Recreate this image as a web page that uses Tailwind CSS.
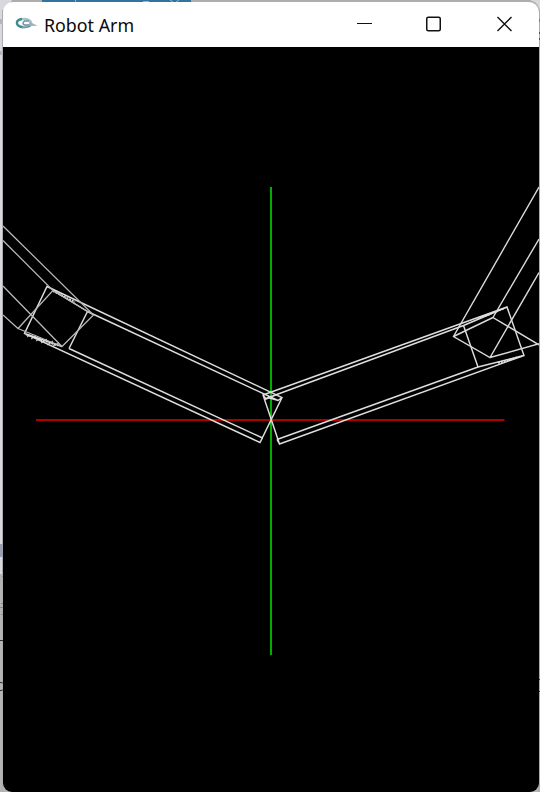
<!DOCTYPE html>
<html lang="en">
<head>
<meta charset="utf-8">
<title>Robot Arm</title>
<script src="https://cdn.jsdelivr.net/npm/@tailwindcss/browser@4"></script>
</head>
<body class="relative h-[792px] w-[540px] overflow-hidden bg-[#b4b4b6]">
<!-- desktop strips visible around the window -->
<svg class="absolute inset-0" width="540" height="792" viewBox="0 0 540 792">
<path fill="#d8d8df" d="M0 0h12v5H7L2 14v560H0z"/>
<path fill="#adadad" d="M12 0h528v4H10zM2 10h1v782H2zM538 10h2v782h-2z"/>
<path fill="#3274a0" d="M42 0h149v2H42z"/>
<path stroke="#8fb7d1" d="M75.500 0v2M143 1.500h6M170 0l3 2M179 0l-3 2"/>
<path fill="#b4b4c4" d="M0 19h3v5H0zM0 51h3v4H0z"/>
<path fill="#9a9eaf" d="M0 544h3v13H0z"/>
<path stroke="#303030" d="M0 640.500h3M0 682.500h2l1 1M0 690.500h2l1-1M539 679.500h1M539 691.500h1"/>
<path stroke="#888" d="M2 570.500h1M2 576.500h1M1 603.500h2M0 607.500h3M1 614.500h2"/>
<path fill="#d8d8dc" d="M530 0h10v10z"/>
<path fill="#adadad" d="M528 0q11 1 12 13h-3L527 2z"/>
<path fill="#4c8fae" d="M539 19h1v3h-1z"/><path fill="#664c55" d="M539 32h1v2h-1zM539 38h1v2h-1z"/>
</svg>
<main class="relative ml-[3px] flex h-[792px] w-[536px] flex-col overflow-hidden rounded-b-[9px] rounded-t-[10px] pt-[2px]">
<header class="flex h-[45px] shrink-0 items-center rounded-t-[10px] bg-white">
<svg class="mb-[4px] ml-[12px] shrink-0" width="24" height="14" viewBox="0 0 24 14" fill="none">
<ellipse cx="9" cy="7" rx="7" ry="4" stroke="#a9c3cb" stroke-width="2.500"/>
<path d="M7 2.800C-.5 4 .5 10.500 8 11.300" stroke="#3d8c90" stroke-width="2.200"/>
<path d="M7 11.300q5 1 9-1.600" stroke="#6f9ba5" stroke-width="1.500"/>
<path d="M14 5H9.500q-3 2.500 0 4h6" stroke="#6f929e" stroke-width="1.500"/>
<path d="M14 5.500l8.500 4.200-8 .3z" fill="#9bb3bd"/>
</svg>
<h1 class="ml-[5px] w-[100px] whitespace-nowrap font-['Noto_Sans',sans-serif] text-[18px] leading-[24px] font-normal text-[#0a0a0a]"><span class="inline-block origin-left scale-x-[.99]">Robot Arm</span></h1>
<div class="ml-auto flex items-center pr-[26px]">
<svg width="18" height="18" viewBox="0 0 18 18"><path stroke="#111" d="M2 7.500h15"/></svg>
<svg class="ml-[51px]" width="18" height="18" viewBox="0 0 18 18" fill="none"><rect x="2.750" y="1.250" width="13.500" height="13.500" rx="1.500" stroke="#111" stroke-width="1.500"/></svg>
<svg class="ml-[53px]" width="18" height="18" viewBox="0 0 18 18"><path stroke="#111" stroke-width="1.400" d="M2.500 1l14 14M16.500 1l-14 14"/></svg>
</div>
</header>
<section class="min-h-0 flex-1 bg-black">
<svg class="block" width="536" height="745" viewBox="3 47 536 745" fill="none">
<path stroke="#00ad00" stroke-width="2" d="M271 187v468"/>
<path stroke="#ad0000" stroke-width="2" d="M36 420h468.500"/>
<g stroke="#dedede" stroke-width="1.450">
<path d="M47 286.500L282 397.500 260 442.500 24.500 333.500zM87.500 311.500L278 400.500M69 348.500L262.500 438M87.500 311.500L69 348.500M53 290.500L87.500 311.500M24.500 333.500L62 346.500M260 442.500l2.500-4.500M282 397.500l-4 3-10-3"/>
<path d="M263 395L507 307 524 355.500 279.500 444zM463.500 325.500L266 398.500M478 367L277 439.500M463.500 325.500L478 367M507 307L463.500 325.500M524 355.500L478 367M279.500 444l-2.500-4.500M263 395l3 4 12-5"/>
</g>
<path stroke="#dedede" stroke-width="1.800" stroke-dasharray="2 1" d="M26 334.500L58 345.500M53 291L75 302M485 316L505 308M498 363L522 356"/>
<path stroke="#ddd" d="M27 337l3-2M31 339l5-3M36 341l5-3M41 343l6-4M47 345l6-4M53 346l6-3"/>
<g stroke="#b8b8b8" stroke-width="1.250">
<path d="M3 226L93.500 315 62 346.500 3 286M3 240.500L53 290.500 18 328.500 3 315M53 290.500L93.500 315M18 328.500L62 346.500"/>
<path stroke="#dadada" stroke-width="1.400" d="M539 187L453.500 336.500 490 357.500 539 272.500M539 239L493 317.500 540 345.500M453.500 336.500L493 317.500M490 357.500L540 343.500"/>
</g>
</svg>
</section>
</main>
</body>
</html>
